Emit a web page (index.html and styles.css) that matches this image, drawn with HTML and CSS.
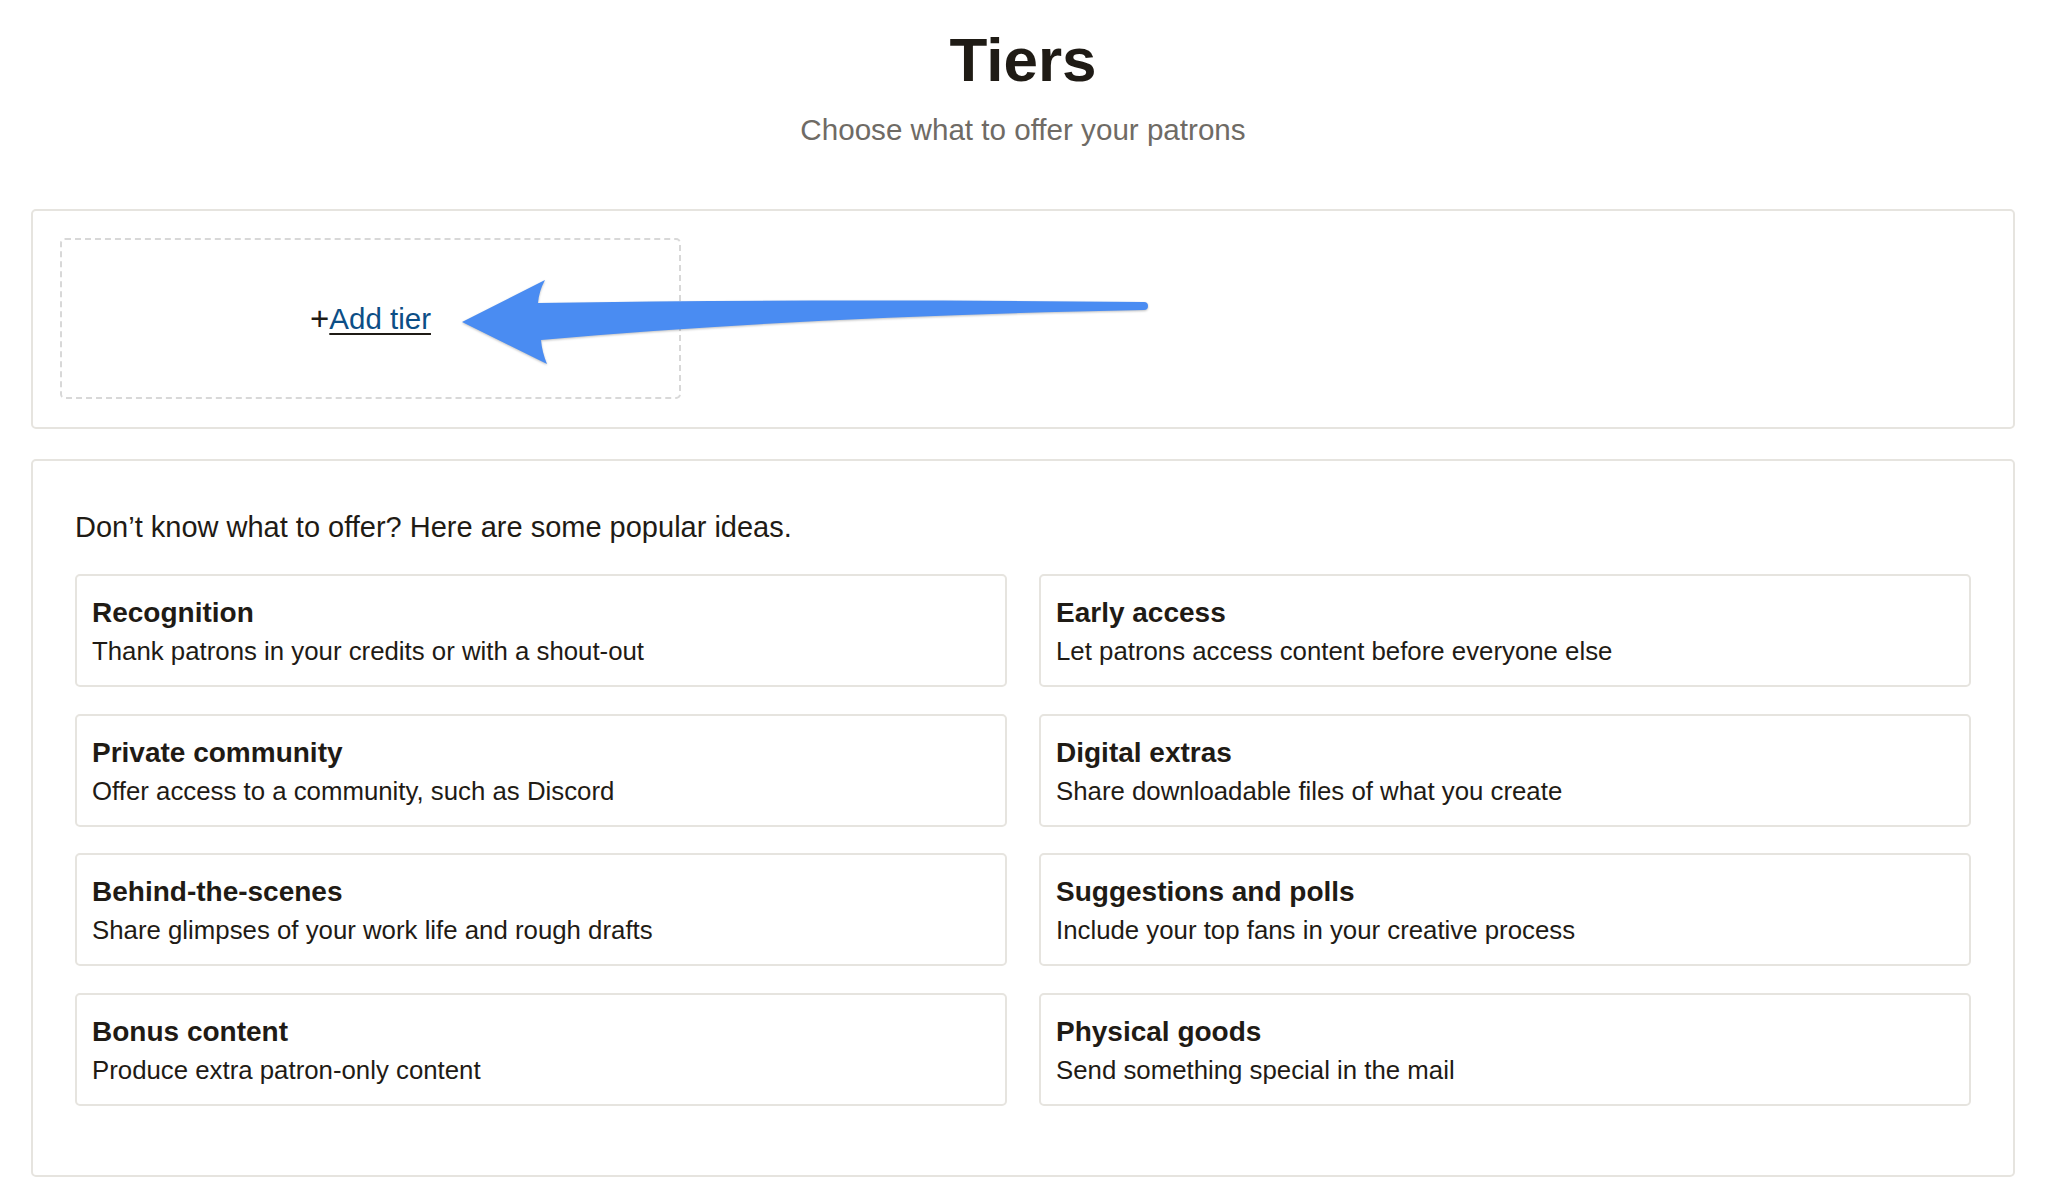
FILE: index.html
```html
<!DOCTYPE html>
<html>
<head>
    <title>Tiers</title>
    <link rel="stylesheet" href="styles.css">
</head>
<body>
<div class="page">
    <header class="header">
        <h1>Tiers</h1>
        <p class="subtitle">Choose what to offer your patrons</p>
    </header>

    <section class="panel tiers-panel">
        <div class="add-tier">
            <span class="plus">+</span><a href="#" class="add-link">Add tier</a>
        </div>
        <!-- annotation arrow drawn over the panel -->
        <svg class="arrow" width="1140" height="170" viewBox="0 0 1140 170">
            <path d="M429,111 L512,69 Q506,80 505,92 C700,89 900,89 1111,91 A4,4 0 0 1 1111,99 C900,103 700,112 508,129 Q509,141 514,153 Z" fill="#4a8cf2"/>
        </svg>
    </section>

    <section class="panel ideas-panel">
        <p class="ideas-intro">Don’t know what to offer? Here are some popular ideas.</p>
        <div class="ideas">
            <div class="idea">
                <h3>Recognition</h3>
                <p>Thank patrons in your credits or with a shout-out</p>
            </div>
            <div class="idea">
                <h3>Early access</h3>
                <p>Let patrons access content before everyone else</p>
            </div>
            <div class="idea">
                <h3>Private community</h3>
                <p>Offer access to a community, such as Discord</p>
            </div>
            <div class="idea">
                <h3>Digital extras</h3>
                <p>Share downloadable files of what you create</p>
            </div>
            <div class="idea">
                <h3>Behind-the-scenes</h3>
                <p>Share glimpses of your work life and rough drafts</p>
            </div>
            <div class="idea">
                <h3>Suggestions and polls</h3>
                <p>Include your top fans in your creative process</p>
            </div>
            <div class="idea">
                <h3>Bonus content</h3>
                <p>Produce extra patron-only content</p>
            </div>
            <div class="idea">
                <h3>Physical goods</h3>
                <p>Send something special in the mail</p>
            </div>
        </div>
    </section>
</div>
</body>
</html>
```

FILE: styles.css
```css
* {
	box-sizing: border-box;
}

body {
	margin: 0;
	background-color: #fff;
	color: #1f1b15;
	font-family: "Liberation Sans", Arial, sans-serif;
}

.page {
	width: 1984px;
	margin-left: 31px;
	padding-top: 24px;
}

.header {
	text-align: center;
	margin-bottom: 59px;
}

h1 {
	margin: 0;
	font-size: 62px;
	line-height: 72px;
	font-weight: bold;
}

.subtitle {
	margin: 14px 0 0;
	font-size: 29.6px;
	line-height: 40px;
	color: #6f6b65;
}

.panel {
	border: 2px solid #e6e4df;
	border-radius: 5px;
	background-color: #fff;
}

.tiers-panel {
	position: relative;
	padding: 27px 27px 28px;
	margin-bottom: 30px;
}

.add-tier {
	width: 621px;
	height: 161px;
	border: 2px dashed #d8d8d8;
	border-radius: 5px;
	display: flex;
	align-items: center;
	justify-content: center;
	font-size: 29.5px;
	line-height: 36px;
}

.plus {
	color: #1f1b15;
	font-size: 33px;
	font-weight: 300;
}

.add-link {
	color: #0c4e86;
	text-decoration: underline;
	text-decoration-color: #1f1b15;
	text-decoration-thickness: 2px;
	text-underline-offset: 4px;
}

.arrow {
	position: absolute;
	left: 0;
	top: 0;
	filter: drop-shadow(0 1px 1px rgba(0, 0, 0, 0.25));
}

.ideas-panel {
	padding: 46px 42px 69px;
}

.ideas-intro {
	margin: 0 0 27px;
	font-size: 29px;
	line-height: 40px;
}

.ideas {
	display: grid;
	grid-template-columns: 1fr 1fr;
	column-gap: 32px;
	row-gap: 26.5px;
}

.idea {
	height: 113px;
	border: 2px solid #e6e4df;
	border-radius: 5px;
	padding: 19px 15px 16px;
}

.idea h3 {
	margin: 0;
	font-size: 28px;
	line-height: 36px;
	font-weight: bold;
}

.idea p {
	margin: 2px 0 0;
	font-size: 25.8px;
	line-height: 36px;
}
```
